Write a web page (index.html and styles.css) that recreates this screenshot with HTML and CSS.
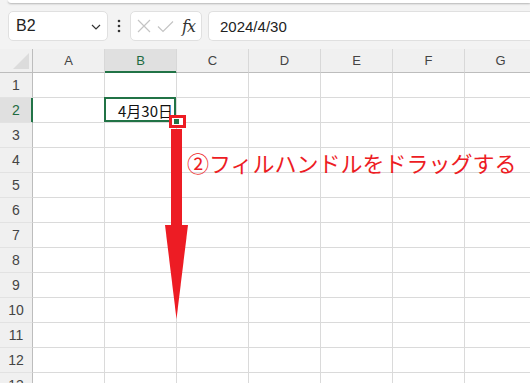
FILE: index.html
```html
<!DOCTYPE html>
<html lang="ja">
<head>
    <meta charset="UTF-8">
    <title>フィルハンドル</title>
    <link rel="stylesheet" href="styles.css">
</head>
<body>
    <div class="toolbar">
        <div class="ribbon-edge"></div>
        <div class="formula-row">
            <div class="namebox">
                <span>B2</span>
                <svg class="chevron" width="10" height="6" viewBox="0 0 10 6"><path d="M1 1 L5 5 L9 1" fill="none" stroke="#333" stroke-width="1.2"/></svg>
            </div>
            <div class="more">
                <svg width="4" height="14" viewBox="0 0 4 14"><circle cx="2" cy="2" r="1.3" fill="#333"/><circle cx="2" cy="7" r="1.3" fill="#333"/><circle cx="2" cy="12" r="1.3" fill="#333"/></svg>
            </div>
            <div class="fx-buttons">
                <svg width="14" height="14" viewBox="0 0 14 14"><path d="M1 1 L13 13 M13 1 L1 13" stroke="#c4c4c4" stroke-width="1.2"/></svg>
                <svg width="17" height="13" viewBox="0 0 17 13"><path d="M1 6.5 L6 11.5 L16 1.5" fill="none" stroke="#c4c4c4" stroke-width="1.2"/></svg>
                <span class="fx">fx</span>
            </div>
            <div class="formula-input">2024/4/30</div>
        </div>
    </div>

    <div class="sheet">
        <div class="row head">
            <div class="corner"><span class="tri"></span></div>
            <div class="ch">A</div><div class="ch active">B</div><div class="ch">C</div><div class="ch">D</div><div class="ch">E</div><div class="ch">F</div><div class="ch">G</div>
        </div>
        <div class="row"><div class="rh">1</div><div class="c"></div><div class="c"></div><div class="c"></div><div class="c"></div><div class="c"></div><div class="c"></div><div class="c"></div></div>
        <div class="row"><div class="rh active">2</div><div class="c"></div><div class="c selected"><span class="val">4月30日</span><div class="sel-border"></div></div><div class="c"></div><div class="c"></div><div class="c"></div><div class="c"></div><div class="c"></div></div>
        <div class="row"><div class="rh">3</div><div class="c"></div><div class="c"></div><div class="c"></div><div class="c"></div><div class="c"></div><div class="c"></div><div class="c"></div></div>
        <div class="row"><div class="rh">4</div><div class="c"></div><div class="c"></div><div class="c"></div><div class="c"></div><div class="c"></div><div class="c"></div><div class="c"></div></div>
        <div class="row"><div class="rh">5</div><div class="c"></div><div class="c"></div><div class="c"></div><div class="c"></div><div class="c"></div><div class="c"></div><div class="c"></div></div>
        <div class="row"><div class="rh">6</div><div class="c"></div><div class="c"></div><div class="c"></div><div class="c"></div><div class="c"></div><div class="c"></div><div class="c"></div></div>
        <div class="row"><div class="rh">7</div><div class="c"></div><div class="c"></div><div class="c"></div><div class="c"></div><div class="c"></div><div class="c"></div><div class="c"></div></div>
        <div class="row"><div class="rh">8</div><div class="c"></div><div class="c"></div><div class="c"></div><div class="c"></div><div class="c"></div><div class="c"></div><div class="c"></div></div>
        <div class="row"><div class="rh">9</div><div class="c"></div><div class="c"></div><div class="c"></div><div class="c"></div><div class="c"></div><div class="c"></div><div class="c"></div></div>
        <div class="row"><div class="rh">10</div><div class="c"></div><div class="c"></div><div class="c"></div><div class="c"></div><div class="c"></div><div class="c"></div><div class="c"></div></div>
        <div class="row"><div class="rh">11</div><div class="c"></div><div class="c"></div><div class="c"></div><div class="c"></div><div class="c"></div><div class="c"></div><div class="c"></div></div>
        <div class="row"><div class="rh">12</div><div class="c"></div><div class="c"></div><div class="c"></div><div class="c"></div><div class="c"></div><div class="c"></div><div class="c"></div></div>
        <div class="row"><div class="rh">13</div><div class="c"></div><div class="c"></div><div class="c"></div><div class="c"></div><div class="c"></div><div class="c"></div><div class="c"></div></div>
    </div>

    <!-- 注釈（矢印とテキスト） -->
    <svg class="annot" width="530" height="383" viewBox="0 0 530 383">
        <rect x="170.5" y="116.5" width="14" height="10" fill="#fff" stroke="#ed1c24" stroke-width="3"/>
        <rect x="174" y="119" width="5" height="5" fill="#217346"/>
        <rect x="171" y="129" width="11" height="97" fill="#ed1c24"/>
        <polygon points="165,225 188,225 176.5,319" fill="#ed1c24"/>
    </svg>
    <div class="annot-text">②フィルハンドルをドラッグする</div>
</body>
</html>
```

FILE: styles.css
```css
body {
    margin: 0;
    width: 530px;
    height: 383px;
    overflow: hidden;
    position: relative;
    background-color: #fff;
    font-family: 'Liberation Sans', 'Noto Sans CJK JP', sans-serif;
    color: #222;
}

/* 数式バー */
.toolbar {
    height: 49px;
    background-color: #f3f3f3;
}

.ribbon-edge {
    margin-left: 8px;
    height: 3px;
    background-color: #fff;
    border-bottom-left-radius: 6px;
    box-shadow: 0 1px 2px rgba(0, 0, 0, 0.25);
}

.formula-row {
    display: flex;
    margin-top: 8px;
    height: 30px;
    margin-left: 8px;
    margin-right: -10px;
}

.namebox {
    width: 100px;
    box-sizing: border-box;
    background-color: #fff;
    border: 1px solid #e0e0e0;
    border-radius: 5px;
    display: flex;
    align-items: center;
    justify-content: space-between;
    padding: 0 6px 0 7px;
    font-size: 16px;
}

.chevron {
    margin-top: 1px;
}

.more {
    width: 22px;
    display: flex;
    align-items: center;
    justify-content: center;
}

.fx-buttons {
    width: 72px;
    box-sizing: border-box;
    background-color: #fff;
    border: 1px solid #e0e0e0;
    border-radius: 5px;
    display: flex;
    align-items: center;
    padding: 0 5px 0 6px;
    gap: 6px;
}

.fx {
    font-family: 'DejaVu Serif', 'Liberation Serif', serif;
    font-style: italic;
    font-size: 16px;
    color: #333;
    margin-left: 2px;
    letter-spacing: -1px;
}

.formula-input {
    flex: 1;
    margin-left: 6px;
    background-color: #fff;
    border: 1px solid #e0e0e0;
    border-right: none;
    border-radius: 5px 0 0 5px;
    display: flex;
    align-items: center;
    padding-left: 11px;
    font-size: 15px;
}

/* シート */
.sheet {
    width: 537px;
}

.row {
    display: grid;
    grid-template-columns: 33px repeat(7, 72px);
    height: 25px;
}

.row.head {
    height: 24px;
}

.row > div {
    box-sizing: border-box;
}

.c {
    border-right: 1px solid #dadada;
    border-bottom: 1px solid #dadada;
    position: relative;
}

.corner {
    background-color: #f0f0f0;
    border-right: 1px solid #bdbdbd;
    border-bottom: 1px solid #bdbdbd;
    position: relative;
}

.tri {
    position: absolute;
    left: 13px;
    top: 4px;
    width: 0;
    height: 0;
    border-left: 16px solid transparent;
    border-bottom: 16px solid #dcdcdc;
}

.ch {
    background-color: #f0f0f0;
    border-right: 1px solid #d8d8d8;
    border-bottom: 1px solid #bdbdbd;
    font-size: 13px;
    color: #444;
    display: flex;
    align-items: center;
    justify-content: center;
}

.ch.active {
    background-color: #e0e0e0;
    color: #1e6b41;
    border-bottom-color: #217346;
    box-shadow: inset 0 -1px 0 #217346;
}

.rh {
    background-color: #f0f0f0;
    border-right: 1px solid #bdbdbd;
    border-bottom: 1px solid #e2e2e2;
    font-size: 14px;
    color: #444;
    display: flex;
    align-items: center;
    justify-content: center;
}

.rh.active {
    background-color: #e0e0e0;
    color: #1e6b41;
    border-right-color: #217346;
    box-shadow: inset -1px 0 0 #217346;
}

.selected {
    display: flex;
    align-items: center;
    justify-content: flex-end;
    padding-right: 3px;
}

.val {
    font-family: 'Noto Sans CJK JP', sans-serif;
    font-size: 15px;
    color: #111;
    margin-top: 1px;
}

.sel-border {
    position: absolute;
    top: -1px;
    left: -1px;
    right: 0;
    bottom: 0;
    border: 2px solid #217346;
}

/* 注釈 */
.annot {
    position: absolute;
    left: 0;
    top: 0;
}

.annot-text {
    position: absolute;
    left: 187px;
    top: 151px;
    font-family: 'Noto Sans CJK JP', sans-serif;
    font-size: 22px;
    line-height: 22px;
    color: #ed1c24;
    white-space: nowrap;
}
```
